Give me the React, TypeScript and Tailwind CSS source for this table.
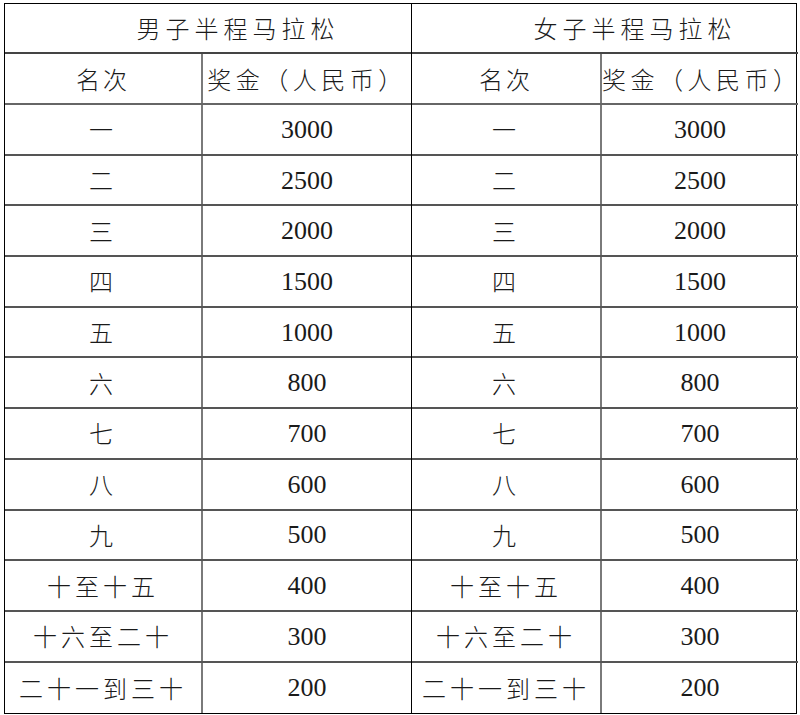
const rows: [string, string][] = [
  ["一", "3000"],
  ["二", "2500"],
  ["三", "2000"],
  ["四", "1500"],
  ["五", "1000"],
  ["六", "800"],
  ["七", "700"],
  ["八", "600"],
  ["九", "500"],
  ["十至十五", "400"],
  ["十六至二十", "300"],
  ["二十一到三十", "200"],
];

const cjk = "font-['Noto_Sans_CJK_SC',sans-serif] font-light";
const num = "font-['Liberation_Serif',serif]";

function Half({ title, rankW }: { title: string; rankW: string }) {
  return (
    <div className="flex flex-col">
      <div
        className={`flex h-[50px] items-center justify-center border-b-2 border-[#444] pl-[60px] text-[24px] tracking-[5px] ${cjk}`}
      >
        {title}
      </div>
      <div className="flex h-[51px] border-b-2 border-[#666]">
        <div
          className={`flex ${rankW} items-center justify-center border-r-2 border-[#7a7a7a] text-[24px] tracking-[3px] ${cjk}`}
        >
          名次
        </div>
        <div
          className={`flex flex-1 items-center justify-center text-[24px] tracking-[4.5px] ${cjk}`}
        >
          奖金（人民币）
        </div>
      </div>
      {rows.map(([rank, prize], i) => (
        <div
          key={rank}
          className={`flex h-[50.7px] ${i < rows.length - 1 ? "border-b-2 border-[#555]" : ""}`}
        >
          <div
            className={`flex ${rankW} items-center justify-center border-r-2 border-[#7a7a7a] text-[24px] tracking-[4px] ${cjk}`}
          >
            {rank}
          </div>
          <div className={`flex flex-1 items-center justify-center text-[26px] ${num}`}>
            {prize}
          </div>
        </div>
      ))}
    </div>
  );
}

export default function App() {
  return (
    <div className="h-[715px] w-[800px] bg-white pl-[4px] pt-[3px] text-[#1a1a1a]">
      <div className="grid w-[793px] grid-cols-[407px_386px] border border-black">
        <div className="border-r-[1.5px] border-black">
          <Half title="男子半程马拉松" rankW="w-[198px]" />
        </div>
        <div>
          <Half title="女子半程马拉松" rankW="w-[190px]" />
        </div>
      </div>
    </div>
  );
}
